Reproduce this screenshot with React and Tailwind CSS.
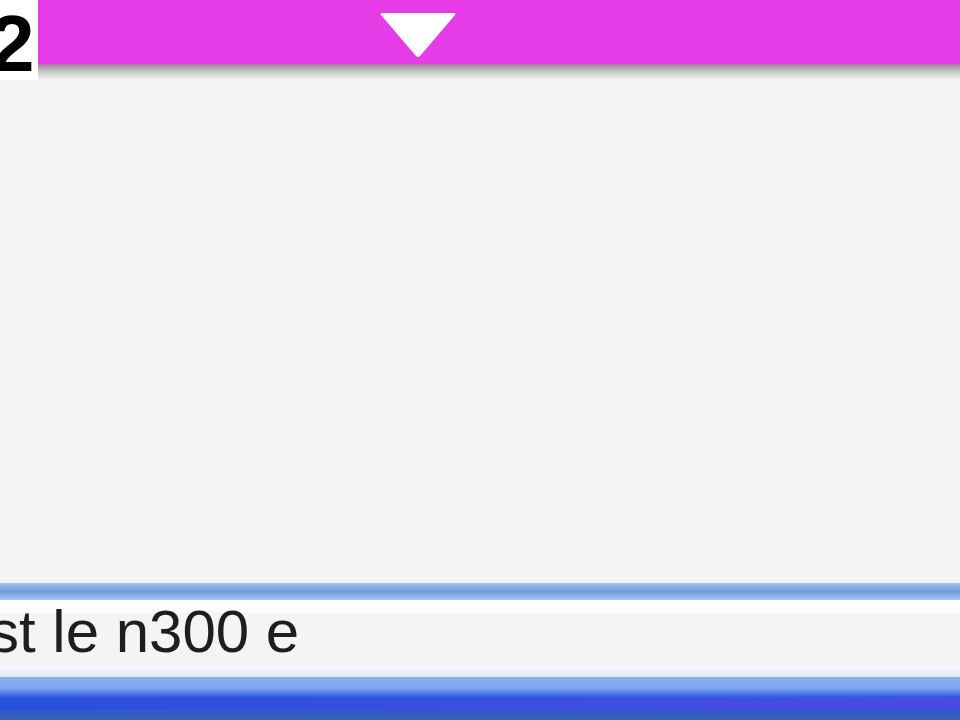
import React from 'react';

const Triangle = () => (
  <svg width="80" height="50" viewBox="0 0 80 50" className="mt-[10px] ml-[340px]">
    <path d="M4 3 L76 3 Q78 3 77 5 L42 46 Q40 48 38 46 L3 5 Q2 3 4 3 Z" fill="#ffffff" />
  </svg>
);

export default function App() {
  return (
    <div className="w-[960px] h-[720px] bg-[#f4f4f4] overflow-hidden flex flex-col font-['Liberation_Sans',Arial,sans-serif]">
      <div className="flex h-[80px]">
        <div className="w-[38px] bg-white overflow-hidden">
          <span className="block -ml-[10px] text-[80px] leading-[88px] font-bold text-black">2</span>
        </div>
        <div className="flex-1 flex flex-col">
          <div className="h-[64px] bg-[#e63ce8] flex items-start">
            <Triangle />
          </div>
          <div className="h-[16px] bg-gradient-to-b from-[#a47aa0] via-[#c6cac6] to-[#f4f4f4]" />
        </div>
      </div>

      <div className="flex-1" />

      <div className="h-[3px] bg-[#eef4fc]" />
      <div className="h-[17px] bg-gradient-to-b from-[#a6c2f0] via-[#7099dc] to-[#a8c8f4]" />
      <div className="h-[13px] bg-[#fbfdff]" />
      <div className="h-[54px] bg-[#f4f4f4]">
        <p className="-ml-[11px] text-[60px] leading-[38px] text-[#1e1e1e] whitespace-nowrap">st le n300 e</p>
      </div>
      <div className="h-[10px] bg-gradient-to-b from-[#f4f7fc] to-[#dfe9fa]" />
      <div className="h-[13px] bg-gradient-to-b from-[#8cb0ee] to-[#78a0f0]" />
      <div className="h-[8px] bg-gradient-to-b from-[#6f96ea] to-[#2b52dc]" />
      <div className="h-[12px] bg-gradient-to-r from-[#2850dc] via-[#3a4ee2] to-[#4a4ae4]" />
      <div className="h-[10px] bg-gradient-to-b from-[#3358c8] to-[#3a64b8]" />
    </div>
  );
}
